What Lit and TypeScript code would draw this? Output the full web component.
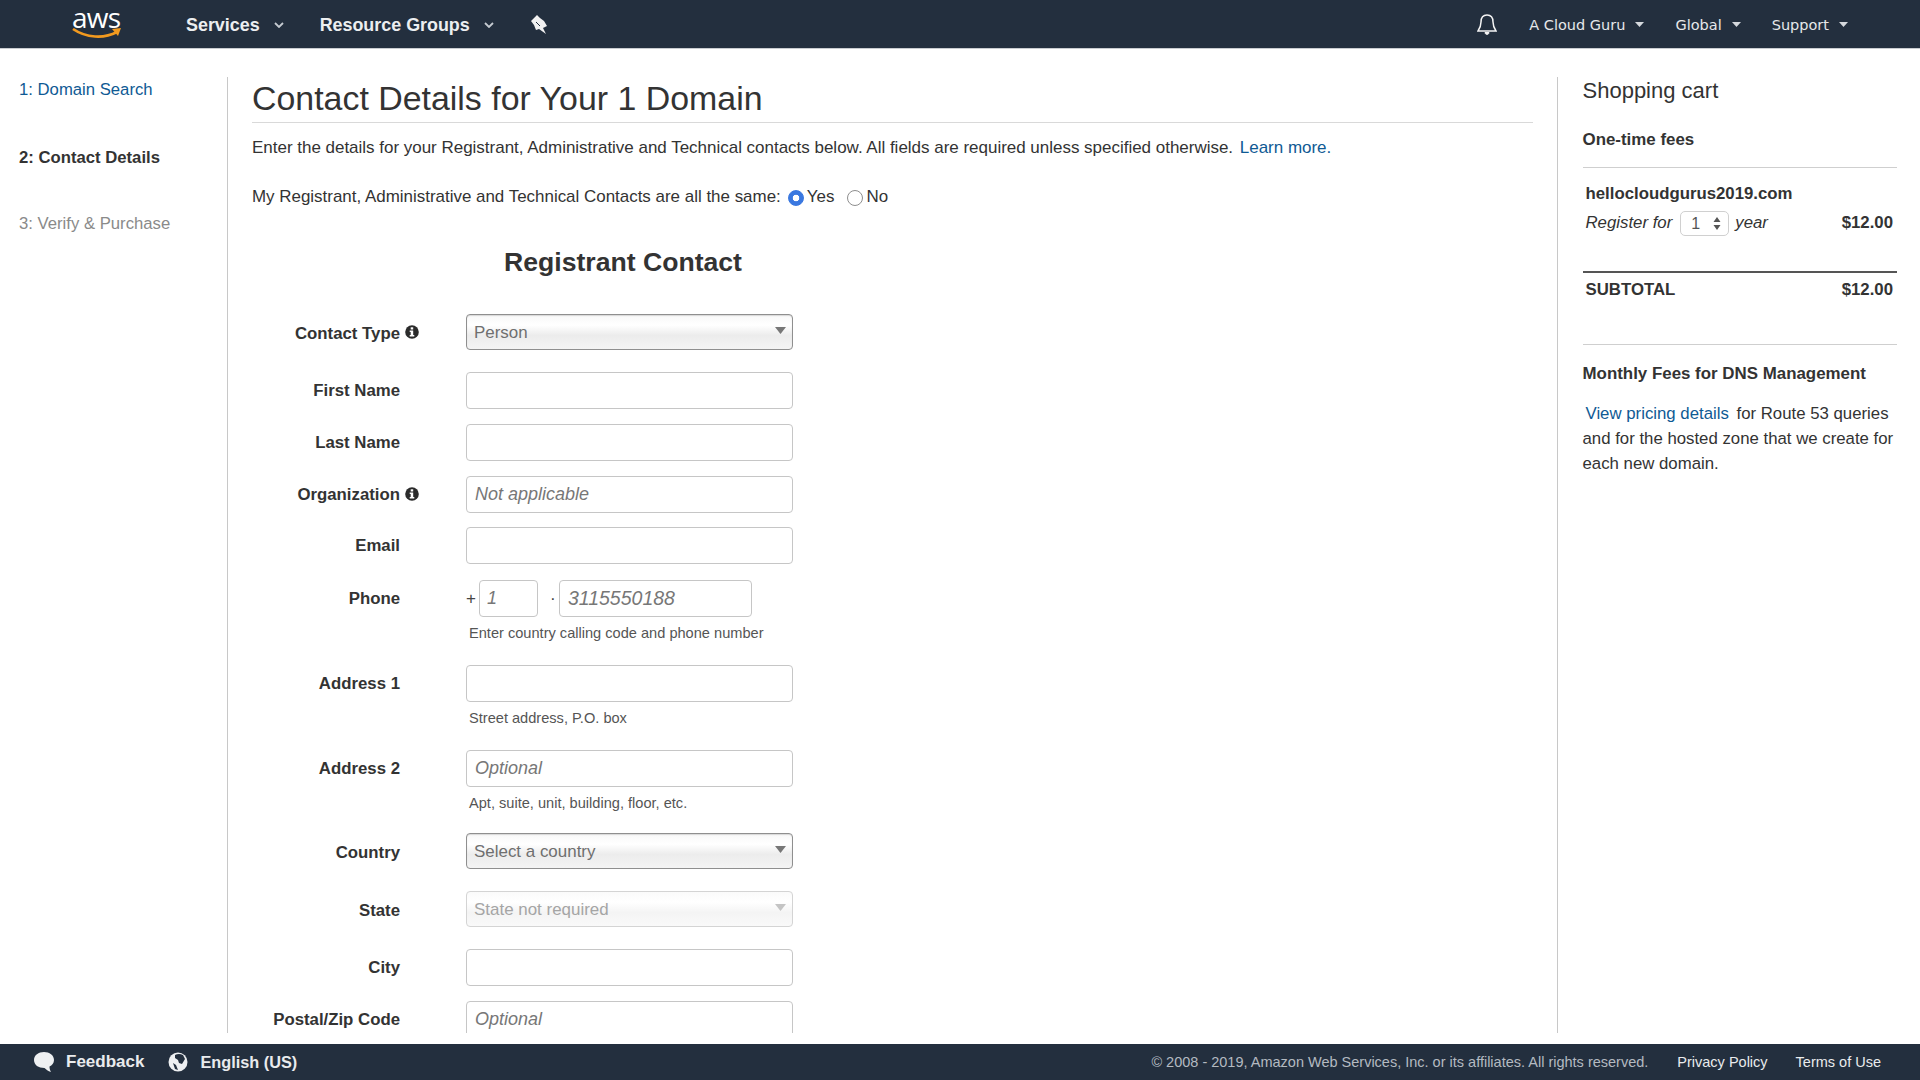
import { LitElement, html, css } from 'lit';
import { customElement } from 'lit/decorators.js';

const chevron = html`<svg class="chev" width="10" height="6" viewBox="0 0 10 6"><path d="M1 1l4 4 4-4" fill="none" stroke="#c5cbd1" stroke-width="1.8"/></svg>`;
const caret = html`<svg class="caret-small" width="9" height="5" viewBox="0 0 9 5"><path d="M0 0h9L4.5 5z" fill="#d5d9dd"/></svg>`;
const info = html`<svg class="info" width="14" height="14" viewBox="0 0 14 14"><circle cx="7" cy="7" r="6.800" fill="#2b2b2b"/><rect x="5.700" y="2.300" width="2.500" height="2.200" fill="#fff"/><path d="M4.700 5.400h3.500v4.500h1.100v1.600H4.700V9.900h1V7h-1z" fill="#fff"/></svg>`;

interface Field {
  label: string;
  type: 'select' | 'input' | 'phone';
  value?: string;
  placeholder?: string;
  hint?: string;
  info?: boolean;
  disabled?: boolean;
  gap: number;
}

const fields: Field[] = [
  { label: 'Contact Type', type: 'select', value: 'Person', info: true, gap: 22 },
  { label: 'First Name', type: 'input', gap: 15 },
  { label: 'Last Name', type: 'input', gap: 15 },
  { label: 'Organization', type: 'input', placeholder: 'Not applicable', info: true, gap: 14 },
  { label: 'Email', type: 'input', gap: 16 },
  { label: 'Phone', type: 'phone', hint: 'Enter country calling code and phone number', gap: 23 },
  { label: 'Address 1', type: 'input', hint: 'Street address, P.O. box', gap: 23 },
  { label: 'Address 2', type: 'input', placeholder: 'Optional', hint: 'Apt, suite, unit, building, floor, etc.', gap: 21 },
  { label: 'Country', type: 'select', value: 'Select a country', gap: 22 },
  { label: 'State', type: 'select', value: 'State not required', disabled: true, gap: 22 },
  { label: 'City', type: 'input', gap: 15 },
  { label: 'Postal/Zip Code', type: 'input', placeholder: 'Optional', gap: 15 },
];

@customElement('app-root')
export class AppRoot extends LitElement {
  static styles = css`
    :host {
      display: flex;
      flex-direction: column;
      height: 1080px;
      overflow: hidden;
      background: #fff;
      color: #333;
      font-family: "Liberation Sans", Arial, sans-serif;
      font-size: 16.950px;
    }
    a { color: #0f5a94; text-decoration: none; }

    .topbar {
      height: 48px;
      flex: none;
      display: flex;
      align-items: center;
      background: #232f3e;
      border-bottom: 1px solid #c9ccd0;
      color: #fff;
    }
    .logo {
      position: relative;
      width: 50px;
      margin-left: 72px;
      height: 48px;
    }
    .logo span {
      position: absolute;
      left: 0;
      top: 0;
      font-family: "Open Sans", sans-serif;
      font-size: 28px;
      line-height: 38px;
      margin-top: -2px;
      letter-spacing: -0.8px;
      color: #fff;
    }
    .logo svg { position: absolute; left: 0; top: 28px; }
    .nav {
      display: flex;
      align-items: center;
      font-weight: 700;
      font-size: 17.900px;
      line-height: 20px;
      padding-top: 1px;
      color: #eceef0;
    }
    .chev { margin-left: 14px; }
    .services { margin-left: 64px; }
    .groups { margin-left: 36px; }
    .pin { margin-left: 37px; }
    .spacer { flex: 1; }
    .bell { margin-right: 32px; }
    .menu {
      display: flex;
      align-items: center;
      font-family: "DejaVu Sans", sans-serif;
      font-size: 14.500px;
      padding-top: 1px;
      color: #e6e8ea;
    }
    .caret-small { margin-left: 10px; }
    .menu.guru { margin-right: 31px; }
    .menu.global { margin-right: 31px; }
    .menu.support { margin-right: 72px; }

    .main {
      flex: 1;
      min-height: 0;
      display: flex;
      padding: 28px 0 11px;
    }
    .steps {
      width: 227px;
      flex: none;
      padding: 4px 0 0 19px;
      box-sizing: border-box;
      font-size: 16.700px;
    }
    .steps div { height: 18px; line-height: 18px; }
    .step-link { color: #0f5a94; }
    .step-now { font-weight: 700; margin-top: 50px; }
    .step-next { color: #8a8a8a; margin-top: 48px; }
    .center {
      width: 1331px;
      flex: none;
      box-sizing: border-box;
      border-left: 1px solid #c8c8c8;
      border-right: 1px solid #c8c8c8;
      padding-left: 24px;
      overflow: hidden;
    }
    .center-in { width: 1281px; }
    h1 {
      margin: 0;
      font-size: 33.900px;
      font-weight: 400;
      line-height: 42px;
      padding-bottom: 3px;
      border-bottom: 1px solid #d9d9d9;
      color: #333;
    }
    .lead { margin: 15px 0 0; line-height: 20px; font-size: 17px; letter-spacing: -0.017px; }
    .lead a { margin-left: 2px; }
    .same {
      display: flex;
      align-items: center;
      margin-top: 29px;
      height: 20px;
    }
    .same label { display: flex; align-items: center; }
    .same input {
      appearance: none;
      box-sizing: border-box;
      width: 16px;
      height: 16px;
      margin: 1px 3px 0 7px;
      border: 1px solid #8e8e8e;
      border-radius: 50%;
      background: #fff;
    }
    .same input:checked {
      border-color: #3a78e0;
      background: radial-gradient(circle, #fff 0 3px, #3a78e0 3.600px);
    }
    .same .no input { margin-left: 13px; }
    h2 {
      margin: 39px 0 0;
      width: 742px;
      text-align: center;
      font-size: 26.600px;
      line-height: 32px;
      font-weight: 700;
    }
    .form { margin-top: 36px; }
    .row { display: flex; }
    .lab {
      width: 148px;
      height: 36px;
      flex: none;
      text-align: right;
      font-weight: 700;
      font-size: 16.800px;
      line-height: 38px;
      position: relative;
      white-space: nowrap;
    }
    .lab.for-select { line-height: 40px; }
    .info { position: absolute; left: 153px; top: 11px; }
    .ctl { margin-left: 66px; width: 327px; }
    .text {
      display: block;
      box-sizing: border-box;
      width: 100%;
      height: 37px;
      padding: 0 8px;
      margin: 0;
      border: 1px solid #c6c6c6;
      border-radius: 4px;
      background: #fff;
      font: inherit;
      font-size: 18px;
      color: #333;
      outline: none;
    }
    .text::placeholder { color: #777; font-style: italic; opacity: 1; }
    .sel { position: relative; }
    .sel select {
      display: block;
      box-sizing: border-box;
      width: 100%;
      height: 36px;
      padding: 0 7px;
      margin: 0;
      appearance: none;
      border: 1px solid #8f8f8f;
      border-radius: 4px;
      background: linear-gradient(#f8f8f8, #fff 30%, #ececec 60%, #f4f4f4);
      font: inherit;
      color: #6f6f6f;
      box-shadow: inset 0 1px 1px #d8d8d8;
    }
    .sel select:disabled {
      border-color: #d4d4d4;
      color: #a5a5a5;
      background: linear-gradient(#fafafa, #fff 30%, #f4f4f4 60%, #f9f9f9);
      box-shadow: none;
      opacity: 1;
    }
    .sel svg { position: absolute; right: 7px; top: 13px; pointer-events: none; }
    .phone { display: flex; align-items: center; height: 37px; font-size: 17px; color: #444; }
    .phone .cc { width: 59px; margin-left: 3px; padding: 0 7px; }
    .phone .dot { margin-left: 12px; width: 8px; }
    .phone .num { width: 193px; margin-left: 1px; font-size: 19.500px; }
    .hint {
      font-size: 14.600px;
      line-height: 18px;
      margin: 7px 0 0 3px;
      color: #555;
    }

    .cart {
      flex: 1;
      padding: 0 23px 0 24.500px;
      box-sizing: border-box;
      min-width: 0;
      font-size: 16.800px;
    }
    .cart h3 { margin: 0; font-size: 22px; font-weight: 400; line-height: 28px; }
    .cart h4 { margin: 0; font-size: 16.900px; font-weight: 700; line-height: 20px; }
    .cart h4.fees { margin-top: 25px; padding-bottom: 17px; border-bottom: 1px solid #cfcfcf; }
    .dom { font-weight: 700; line-height: 20px; margin: 16px 0 0 3px; }
    .reg {
      display: flex;
      align-items: center;
      height: 26px;
      margin: 6px 4px 0 3px;
      font-style: italic;
    }
    .stepper {
      position: relative;
      box-sizing: border-box;
      width: 49px;
      height: 25px;
      margin: 0 6px 0 8px;
      border: 1px solid #d0d0d0;
      border-radius: 5px;
      font-style: normal;
      font-size: 16px;
      line-height: 23px;
      padding-left: 10px;
      color: #555;
    }
    .stepper svg { position: absolute; right: 7px; top: 4px; }
    .price { margin-left: auto; font-style: normal; font-weight: 700; }
    .subtotal {
      display: flex;
      justify-content: space-between;
      margin-top: 35px;
      padding: 7px 4px 0 3px;
      border-top: 2px solid #555;
      font-weight: 700;
      line-height: 20px;
    }
    .cart h4.monthly { margin-top: 44px; padding-top: 19px; border-top: 1px solid #cfcfcf; }
    .desc { margin: 17px 0 0; line-height: 25px; }
    .desc a { margin: 0 3px 0 3px; }

    .foot {
      height: 36px;
      flex: none;
      display: flex;
      align-items: center;
      background: #232f3e;
      color: #e9ebed;
      font-size: 14.500px;
    }
    .foot .big { font-size: 17px; font-weight: 700; }
    .foot svg { flex: none; }
    .foot .fb-icon { margin-left: 33px; }
    .foot .fb { margin-left: 11px; }
    .foot .gl-icon { margin-left: 24px; }
    .foot .en { margin-left: 12px; font-size: 16.300px; }
    .foot .copy { margin-left: auto; color: #b4bac1; }
    .foot .privacy { margin-left: 29px; }
    .foot .terms { margin-left: 28px; margin-right: 39px; }
  `;

  renderControl(f: Field) {
    if (f.type === 'select') {
      return html`<div class="sel">
        <select ?disabled=${f.disabled}><option>${f.value}</option></select>
        <svg width="11" height="7" viewBox="0 0 11 7"><path d="M0 0h11L5.500 7z" fill=${f.disabled ? '#c4c4c4' : '#777'}/></svg>
      </div>`;
    }
    if (f.type === 'phone') {
      return html`<div class="phone">
        <span>+</span>
        <input class="text cc" placeholder="1" />
        <span class="dot">·</span>
        <input class="text num" placeholder="3115550188" />
      </div>`;
    }
    return html`<input class="text" placeholder=${f.placeholder ?? ''} />`;
  }

  render() {
    return html`
      <header class="topbar">
        <div class="logo">
          <span>aws</span>
          <svg width="50" height="12" viewBox="0 0 50 12">
            <path d="M1 1c13 9 31 10 44 3" fill="none" stroke="#f29a1f" stroke-width="2.600"/>
            <path d="M40 1l9-1-3 8z" fill="#f29a1f"/>
          </svg>
        </div>
        <div class="nav services">Services ${chevron}</div>
        <div class="nav groups">Resource Groups ${chevron}</div>
        <svg class="pin" width="16" height="19" viewBox="0 0 16 19">
          <path d="M0 6L6 0l3 3 4 3 3 5-4 2 3 6-7-5-3 1-2-5z" fill="#f1f1f1"/>
          <path d="M5 7l4 4" stroke="#232f3e" stroke-width="1"/>
        </svg>
        <div class="spacer"></div>
        <svg class="bell" width="20" height="23" viewBox="0 0 20 23"><path d="M10 2c-4 0-6 3-6 7 0 4-1 6-3 9h18c-2-3-3-5-3-9 0-4-2-7-6-7z" fill="none" stroke="#f4f4f4" stroke-width="1.500"/><path d="M8 19.500h4c0 2.500-4 2.500-4 0z" fill="#f4f4f4" stroke="#f4f4f4"/></svg>
        <div class="menu guru">A Cloud Guru ${caret}</div>
        <div class="menu global">Global ${caret}</div>
        <div class="menu support">Support ${caret}</div>
      </header>

      <div class="main">
        <nav class="steps">
          <div class="step-link">1: Domain Search</div>
          <div class="step-now">2: Contact Details</div>
          <div class="step-next">3: Verify &amp; Purchase</div>
        </nav>
        <section class="center">
          <div class="center-in">
            <h1>Contact Details for Your 1 Domain</h1>
            <p class="lead">Enter the details for your Registrant, Administrative and Technical contacts below. All fields are required unless specified otherwise. <a href="#">Learn more.</a></p>
            <div class="same">
              <span>My Registrant, Administrative and Technical Contacts are all the same:</span>
              <label><input type="radio" name="same" checked />Yes</label>
              <label class="no"><input type="radio" name="same" />No</label>
            </div>
            <h2>Registrant Contact</h2>
            <div class="form">
              ${fields.map(f => html`
                <div class="row" style="margin-bottom: ${f.gap}px">
                  <div class="lab ${f.type === 'select' ? 'for-select' : ''}">${f.label}${f.info ? info : ''}</div>
                  <div class="ctl">
                    ${this.renderControl(f)}
                    ${f.hint ? html`<div class="hint">${f.hint}</div>` : ''}
                  </div>
                </div>
              `)}
            </div>
          </div>
        </section>
        <aside class="cart">
          <h3>Shopping cart</h3>
          <h4 class="fees">One-time fees</h4>
          <div class="dom">hellocloudgurus2019.com</div>
          <div class="reg">
            <span>Register for</span>
            <div class="stepper">1
              <svg width="8" height="15" viewBox="0 0 8 15"><path d="M4 1l3.500 5h-7zM4 14l3.500-5h-7z" fill="#555"/></svg>
            </div>
            <span>year</span>
            <span class="price">$12.00</span>
          </div>
          <div class="subtotal"><span>SUBTOTAL</span><span>$12.00</span></div>
          <h4 class="monthly">Monthly Fees for DNS Management</h4>
          <p class="desc"><a href="#">View pricing details</a> for Route 53 queries and for the hosted zone that we create for each new domain.</p>
        </aside>
      </div>

      <footer class="foot">
        <svg class="fb-icon" width="22" height="22" viewBox="0 0 22 22"><path d="M11 1c5.500 0 10 3 10 8 0 3-2 5.500-4.500 6.500 0 2 .5 4 1.500 5.500-3-1-5-2.500-6.500-4C5.500 17 1 14 1 9c0-5 4.500-8 10-8z" fill="#eef0f2"/></svg>
        <span class="big fb">Feedback</span>
        <svg class="gl-icon" width="20" height="20" viewBox="0 0 20 20"><circle cx="10" cy="10" r="9.500" fill="#eef0f2"/><path d="M7 3c2-1 5-1.500 8 0l2 4-3 5-3-1-1-3-3-2zM5 11l3 2 2 5-3-1z" fill="#232f3e"/></svg>
        <span class="big en">English (US)</span>
        <span class="copy">© 2008 - 2019, Amazon Web Services, Inc. or its affiliates. All rights reserved.</span>
        <span class="privacy">Privacy Policy</span>
        <span class="terms">Terms of Use</span>
      </footer>
    `;
  }
}
